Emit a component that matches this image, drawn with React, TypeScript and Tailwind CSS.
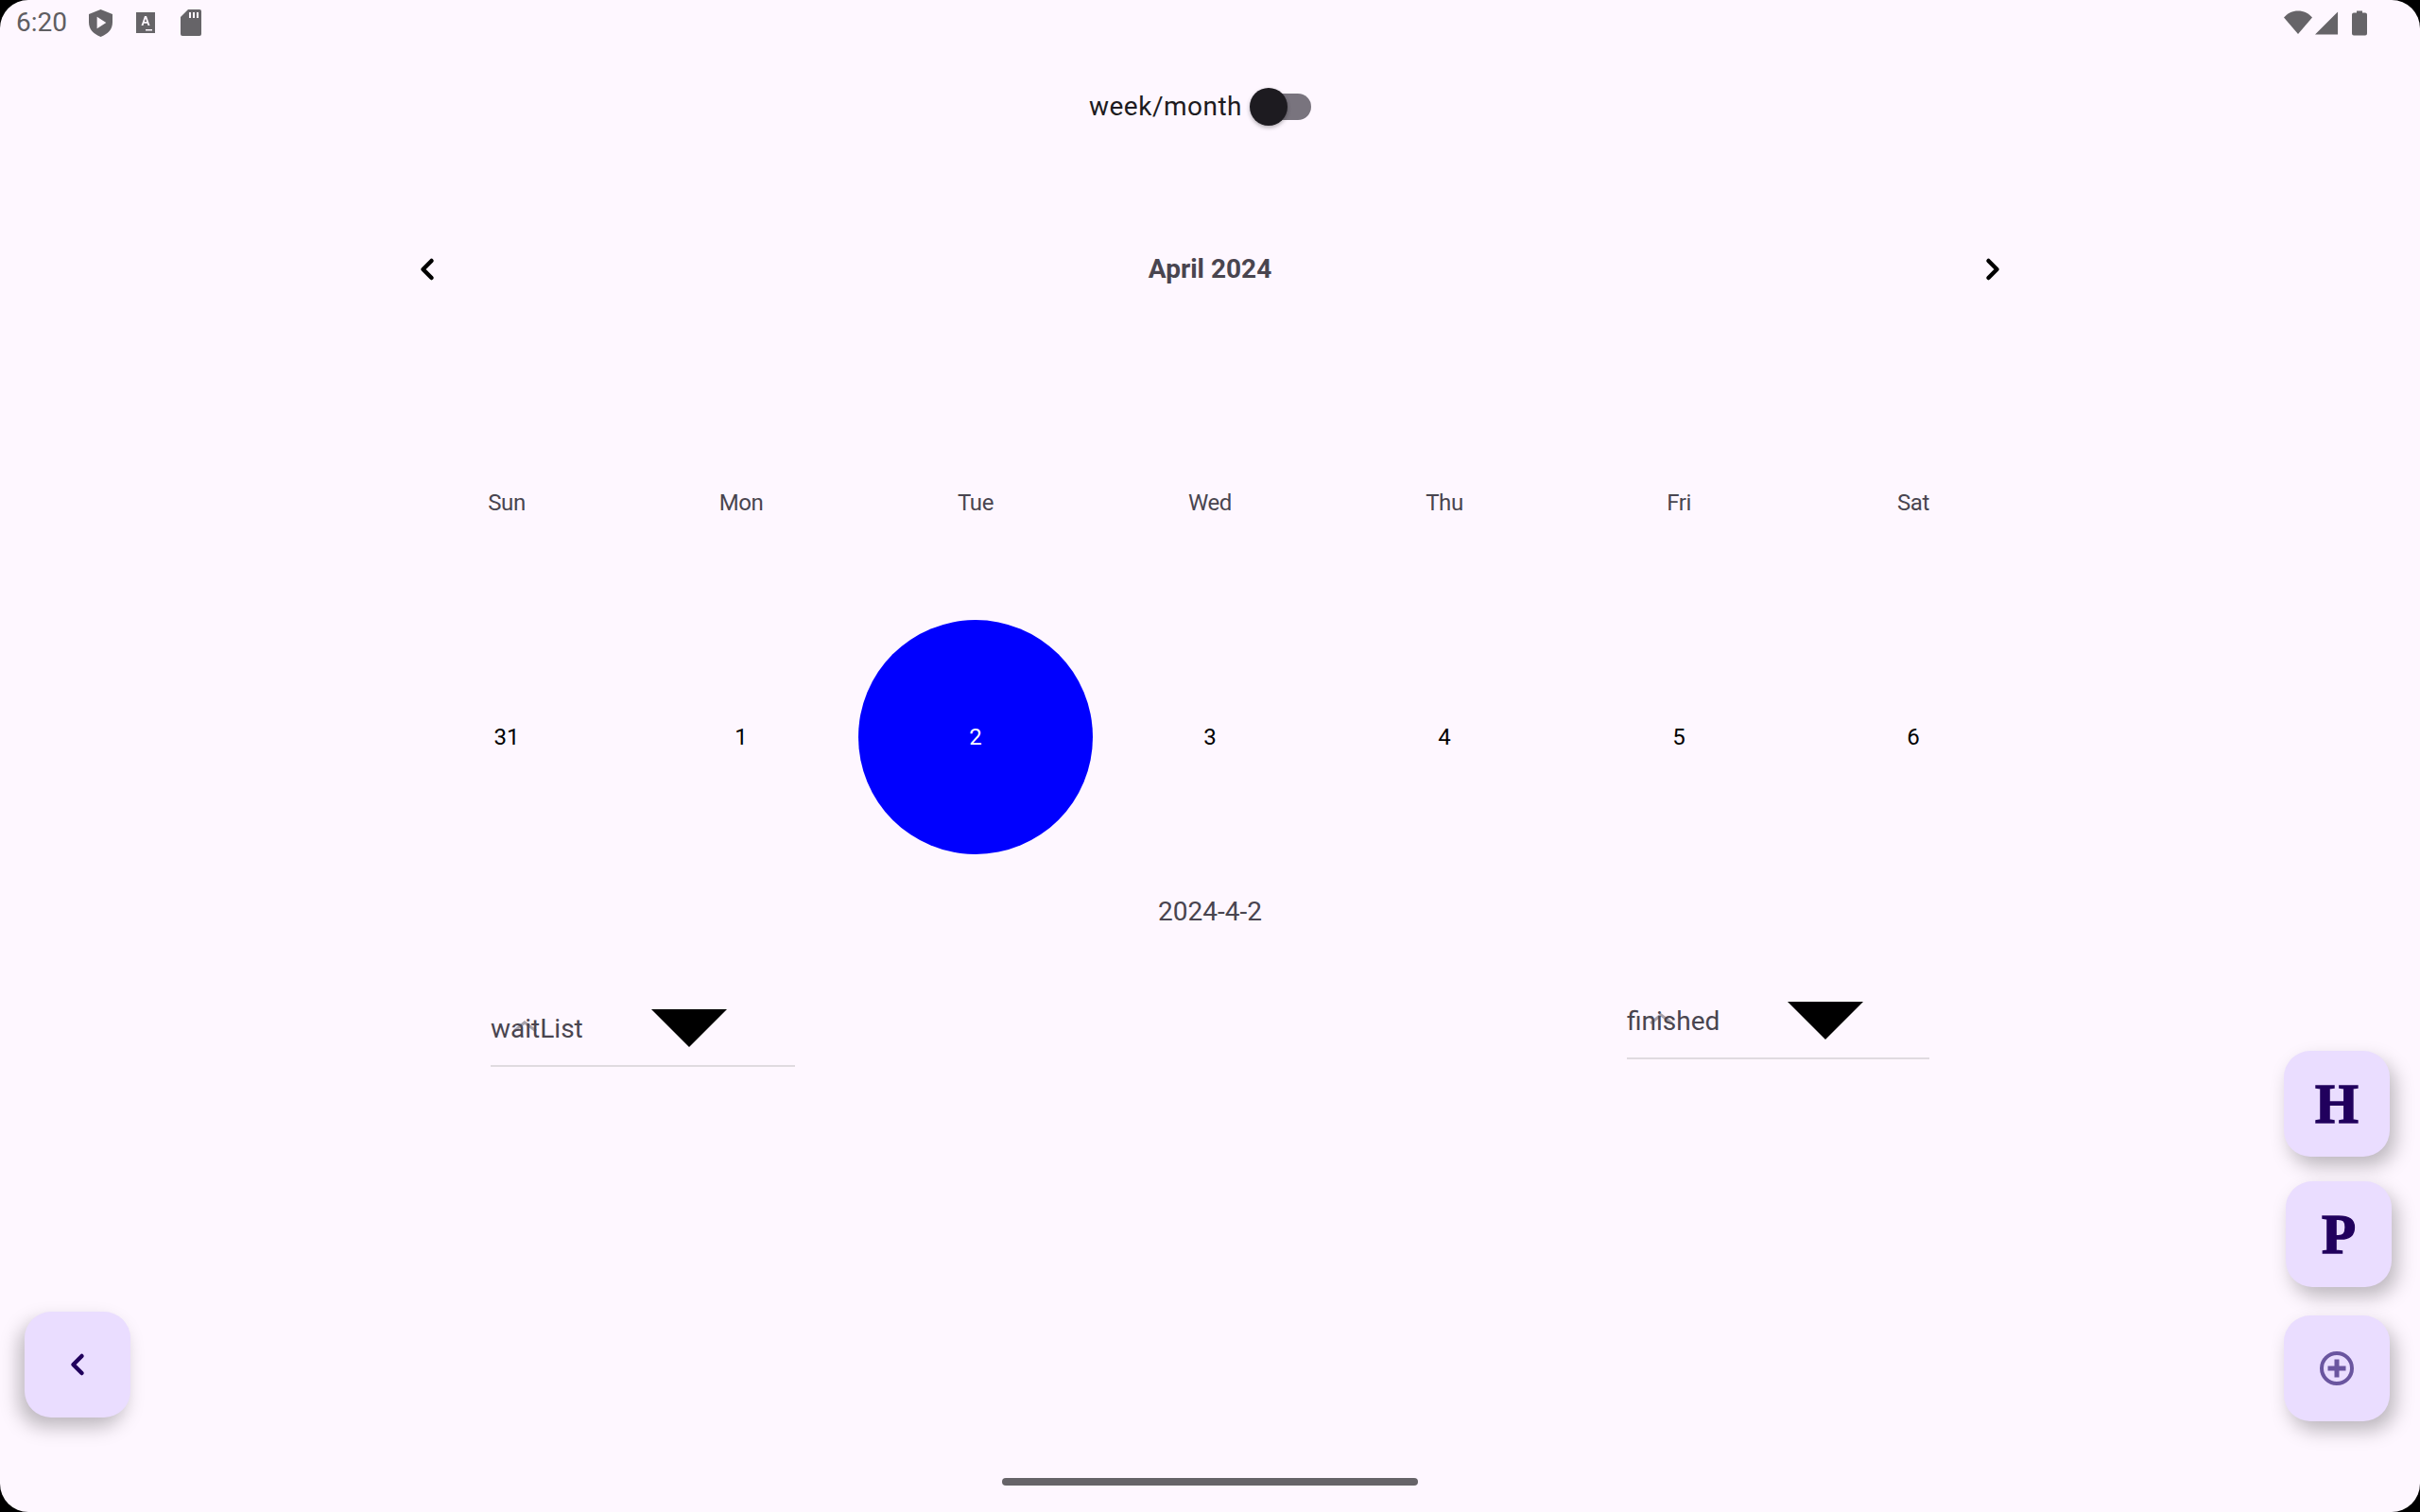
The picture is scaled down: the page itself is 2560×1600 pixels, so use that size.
import { ChevronLeft, ChevronRight } from "lucide-react";

const days = ["Sun", "Mon", "Tue", "Wed", "Thu", "Fri", "Sat"];
const dates = [31, 1, 2, 3, 4, 5, 6];

function Fab({ className, children }: { className: string; children: React.ReactNode }) {
  return (
    <div
      className={`absolute flex h-28 w-28 items-center justify-center rounded-[28px] bg-[#eaddff] text-[#21005d] ${className}`}
    >
      {children}
    </div>
  );
}

function Select({ label, className }: { label: string; className: string }) {
  return (
    <div className={`relative flex h-[80px] items-center border-b-2 border-[#e0dbe0] ${className}`}>
      {/* the little grey caret that sits behind the label on the device */}
      <svg width="26" height="12" viewBox="0 0 26 12" fill="none" className="absolute left-[24px] top-[31px]">
        <path d="M1 11 12 2l12 9" stroke="#a8a3ac" strokeWidth="3" />
      </svg>
      <span className="relative mt-[2px] w-[170px] text-[28px] text-[#49454f]">{label}</span>
      <div className="h-[40px] w-[80px] bg-black [clip-path:polygon(0_0,100%_0,50%_100%)]" />
    </div>
  );
}

export default function App() {
  return (
    <div className="h-[1600px] w-[2560px] overflow-hidden bg-black font-['Roboto',sans-serif]">
      <div className="relative h-full w-full rounded-[30px] bg-[#fef7ff]">
        <div className="flex h-[48px] items-center justify-between pl-[17px] pr-[56px] text-[#5f5e62]">
          <div className="flex items-center">
            <span className="w-[77px] text-[28px]">6:20</span>
            <svg width="25" height="29" viewBox="0 0 26 30" className="mr-[25px]">
              <path d="M13 0 26 5v9c0 8-5 13-13 16C5 27 0 22 0 14V5z" fill="#666468" />
              <path d="M9 8v13l10-6.500z" fill="#fef7ff" />
            </svg>
            <svg width="20" height="22" viewBox="0 0 20 22" className="mr-[27px]">
              <rect width="20" height="22" fill="#666468" />
              <path d="M5.500 14 9 4h2l3.500 10h-2l-.7-2.200H8.200l-.7 2.200zM8.800 10h2.400L10 6.500z" fill="#fef7ff" />
              <rect x="10" y="18" width="7" height="1.500" fill="#fef7ff" />
            </svg>
            <svg width="22" height="28" viewBox="0 0 22 28">
              <path d="M8 0h12a2 2 0 0 1 2 2v24a2 2 0 0 1-2 2H2a2 2 0 0 1-2-2V8z" fill="#666468" />
              <path d="M9 3h2v6H9zM13 3h2v6h-2zM17 3h2v6h-2z" fill="#fef7ff" />
            </svg>
          </div>
          <div className="flex items-center">
            <svg width="30" height="26" viewBox="0 0 30 26" className="mr-[3px]">
              <path d="M15 25 0 7.500C4 3 9 .5 15 .5S26 3 30 7.500z" fill="#666468" />
            </svg>
            <svg width="25" height="25" viewBox="0 0 26 25" className="mr-[14px]">
              <path d="M25 0v25H0z" fill="#666468" />
            </svg>
            <svg width="16" height="27" viewBox="0 0 16 26">
              <path d="M5 0h6v2h3a2 2 0 0 1 2 2v20a2 2 0 0 1-2 2H2a2 2 0 0 1-2-2V4a2 2 0 0 1 2-2h3z" fill="#666468" />
            </svg>
          </div>
        </div>

        <div className="mt-[44px] flex items-center justify-center pr-[21px]">
          <span className="text-[28px] tracking-[0.5px] text-[#1d1b20]">week/month</span>
          <div className="relative ml-[13px] h-[28px] w-[60px] rounded-full bg-[#79747e]">
            <div className="absolute -left-[5px] -top-[6px] h-10 w-10 rounded-full bg-[#1d1b20] shadow-[0_2px_4px_rgba(0,0,0,0.3)]" />
          </div>
        </div>

        <div className="mx-auto mt-[123px] w-[1736px]">
          <div className="flex h-[56px] items-center justify-between pl-[22px] pr-[22px]">
            <ChevronLeft size={36} strokeWidth={3} className="text-black" />
            <span className="text-[28px] font-bold text-[#49454f]">April 2024</span>
            <ChevronRight size={36} strokeWidth={3} className="text-black" />
          </div>
          <div className="mt-[95px] grid grid-cols-7">
            {days.map((d) => (
              <div key={d} className="flex h-[248px] items-center justify-center text-[24px] tracking-[-0.4px] text-[#49454f]">
                {d}
              </div>
            ))}
            {dates.map((d) =>
              d === 2 ? (
                <div key={d} className="flex h-[248px] items-center justify-center rounded-full bg-[#0000ff] text-[24px] text-white">
                  {d}
                </div>
              ) : (
                <div key={d} className="flex h-[248px] items-center justify-center text-[24px] text-black">
                  {d}
                </div>
              ),
            )}
          </div>
          <div className="mt-[40px] text-center text-[28px] text-[#49454f]">2024-4-2</div>
          <div className="mt-[55px] flex items-start justify-between px-[107px]">
            <Select label="waitList" className="mt-[8px] w-[322px]" />
            <Select label="finished" className="w-[320px]" />
          </div>
        </div>

        <Fab className="left-[2416px] top-[1112px] shadow-[6px_10px_20px_rgba(0,0,0,0.26)]">
          <span className="font-['Liberation_Serif',serif] text-[59px] font-bold leading-none [-webkit-text-stroke:1.5px_#21005d]">H</span>
        </Fab>
        <Fab className="left-[2418px] top-[1250px] shadow-[6px_10px_20px_rgba(0,0,0,0.26)]">
          <span className="font-['Liberation_Serif',serif] text-[59px] font-bold leading-none [-webkit-text-stroke:1.5px_#21005d]">P</span>
        </Fab>
        <Fab className="left-[2416px] top-[1392px] shadow-[6px_10px_20px_rgba(0,0,0,0.26)]">
          <svg width="40" height="40" viewBox="0 0 40 40" fill="none" stroke="#6a559f" strokeWidth="4">
            <circle cx="20" cy="20" r="16" />
            <path d="M10.500 20h19M20 10.500v19" strokeWidth="5" />
          </svg>
        </Fab>
        <Fab className="left-[26px] top-[1388px] shadow-[-6px_10px_20px_rgba(0,0,0,0.26)]">
          <ChevronLeft size={36} strokeWidth={3} />
        </Fab>

        <div className="absolute bottom-[28px] left-[1060px] h-2 w-[440px] rounded-full bg-[#666468]" />
      </div>
    </div>
  );
}
